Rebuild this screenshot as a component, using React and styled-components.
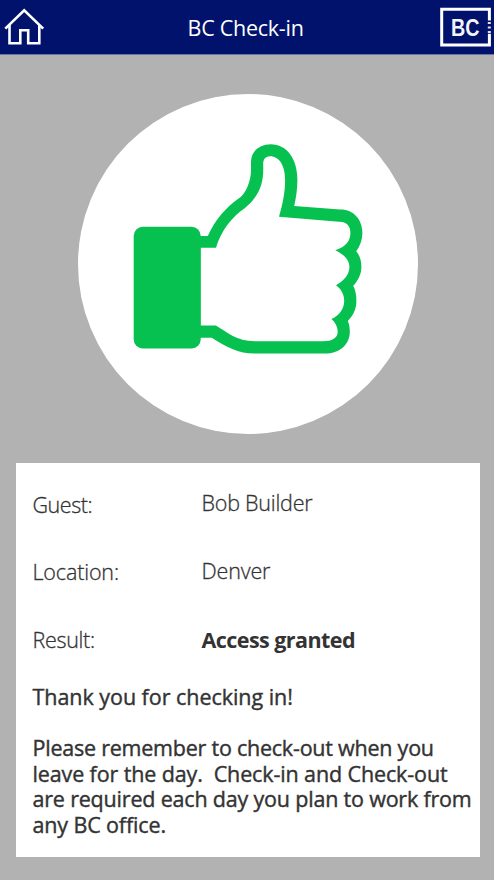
import React from "react";
import styled, { createGlobalStyle } from "styled-components";

const GlobalStyle = createGlobalStyle`
  * { box-sizing: border-box; }
  html, body { margin: 0; background: #b2b2b2; }
  body { font-family: "Open Sans", "Noto Sans", sans-serif; color: #333; }
`;

const Screen = styled.div`
  width: 494px;
  height: 880px;
  overflow: hidden;
  background: #b2b2b2;
  display: flex;
  flex-direction: column;
`;

const Header = styled.header`
  height: 55px;
  flex: none;
  display: grid;
  grid-template-columns: 60px 1fr 60px;
  background: #00126b;
  border-bottom: 1px solid #6d749c;
`;

const HomeButton = styled.button`
  width: 54px;
  height: 54px;
  padding: 0;
  border: 0;
  background: none;
`;

const Icon = styled.svg`
  display: block;
`;

const Title = styled.h1`
  margin: 0 0 0 127.5px;
  color: #fff;
  font-size: 21.5px;
  font-weight: 400;
  line-height: 56px;
  white-space: nowrap;
  letter-spacing: -0.26px;
`;

const Badge = styled.div`
  width: 340px;
  height: 340px;
  flex: none;
  margin: 39px 0 0 78px;
  border-radius: 50%;
  background: #fff;
`;

const Card = styled.section`
  width: 464px;
  height: 394px;
  flex: none;
  margin: 29px 0 0 16px;
  padding: 7px 0 0 16.5px;
  background: #fff;
`;

const Details = styled.dl`
  margin: 0;
`;

const Row = styled.div`
  display: grid;
  grid-template-columns: 169px 1fr;
  height: ${(p) => p.$height}px;
  line-height: 70px;
  font-size: 21.5px;
`;

const Label = styled.dt`
  font-weight: 300;
  -webkit-text-stroke: 0.3px #333;
  letter-spacing: ${(p) => p.$spacing}px;
`;

const Value = styled.dd`
  margin: ${(p) => p.$shift || 0}px 0 0;
  font-weight: ${(p) => (p.$strong ? 700 : 300)};
  -webkit-text-stroke: ${(p) => (p.$strong ? 0 : 0.3)}px #333;
  letter-spacing: ${(p) => p.$spacing}px;
`;

const Message = styled.div`
  padding-top: 11px;
  font-size: 21.5px;
  font-weight: 400;
  -webkit-text-stroke: 0.4px #333;
  line-height: 25.7px;
`;

const Paragraph = styled.p`
  margin: 0 0 25.7px;
`;

const Line = styled.span`
  display: block;
  width: max-content;
  white-space: pre;
  letter-spacing: ${(p) => p.$spacing}px;
`;

const HomeIcon = () => (
  <Icon width="54" height="54" viewBox="0 0 54 54" fill="none" stroke="#fff" strokeWidth="2.6">
    <path d="M5.3 28.6 24.2 10.2 43.2 28.6" />
    <path d="M9.5 25V43.3H20.3V30.2H28.2V43.3H39.3V25" />
  </Icon>
);

const Logo = () => (
  <Icon width="60" height="54" viewBox="0 0 60 54">
    <path d="M55.4 20.5V9.2H7.7V45H55.4V33.8" fill="none" stroke="#fff" strokeWidth="3" />
    <path d="M53.8 23h3M53.8 27.5h3M53.8 32h3" stroke="#dfe1ed" strokeWidth="1.9" />
    <text x="17" y="35.8" fill="#f4f5fa" fontFamily="Liberation Sans, sans-serif" fontSize="24" fontWeight="700" textLength="28.5" lengthAdjust="spacingAndGlyphs">BC</text>
  </Icon>
);

const ThumbIcon = () => (
  <Icon width="340" height="340" viewBox="78 94 340 340" fill="#06c150">
    <rect x="133.7" y="226.8" width="67" height="121.7" rx="9" />
    <path
      fillRule="evenodd"
      d="M200 236H207.8C215 220 226 207 240 197.5C246 193 251 181 251 170V162C251 151 260 144.3 270.7 144.3C287 144.3 297.4 159 297.4 180C297.4 189 296 198 294.2 206L340 209.4C353 209 362.4 219 362.4 233C362.4 240 360 246 356.2 251.2C359.5 255 361.4 260 361.4 266.7C361.4 274 358 281 353.2 285.8C355.5 290 356.4 295 356.4 300.7C356.4 309 353.5 315 347.8 321C349.3 324 349.8 328 349.8 331.7C349.8 345 339 353.6 325 353.6H255C238 353.6 226 346.5 211.7 337.7H200ZM200.5 325.6H215.7C228 332.5 236 341.2 255 341.2H323C332 341.2 337.7 338 337.7 331.7C337.7 327 335.5 322.5 331.5 319C340 315 344.2 308 344.2 300.7C344.2 294 341 289 336 285.2C345 280 349.4 274 349.4 266.7C349.4 260 344 254.5 335.3 250.3C346 246.5 350.4 241 350.4 232.7C350.4 226 346.5 221.5 339 221.7L279 216.8C283 203 285.1 192 285.1 180C285.1 166 279.5 156.3 270 156.3C265.5 156.3 262.8 159.5 263.2 165C264 184 259 196 245 208C232 216.5 221 231 216 247.7H200.5Z"
    />
  </Icon>
);

const details = [
  { label: "Guest:", value: "Bob Builder", height: 67, shift: -2, ls: -0.45, vs: -0.22 },
  { label: "Location:", value: "Denver", height: 68, shift: -1, ls: -0.15, vs: -0.15 },
  { label: "Result:", value: "Access granted", height: 67.5, shift: 0, ls: -0.32, vs: -0.56, strong: true },
];

const instructions = [
  { text: "Please remember to check-out when you", spacing: -0.23 },
  { text: "leave for the day.  Check-in and Check-out", spacing: -0.12 },
  { text: "are required each day you plan to work from", spacing: -0.19 },
  { text: "any BC office.", spacing: -0.14 },
];

export default function App() {
  return (
    <>
      <GlobalStyle />
      <Screen>
        <Header>
          <HomeButton aria-label="Home"><HomeIcon /></HomeButton>
          <Title>BC Check-in</Title>
          <Logo />
        </Header>
        <Badge><ThumbIcon /></Badge>
        <Card>
          <Details>
            {details.map((d) => (
              <Row key={d.label} $height={d.height}>
                <Label $spacing={d.ls}>{d.label}</Label>
                <Value $shift={d.shift} $spacing={d.vs} $strong={d.strong}>{d.value}</Value>
              </Row>
            ))}
          </Details>
          <Message>
            <Paragraph><Line $spacing={-0.04}>Thank you for checking in!</Line></Paragraph>
            <Paragraph>
              {instructions.map((l) => <Line key={l.text} $spacing={l.spacing}>{l.text}</Line>)}
            </Paragraph>
          </Message>
        </Card>
      </Screen>
    </>
  );
}
